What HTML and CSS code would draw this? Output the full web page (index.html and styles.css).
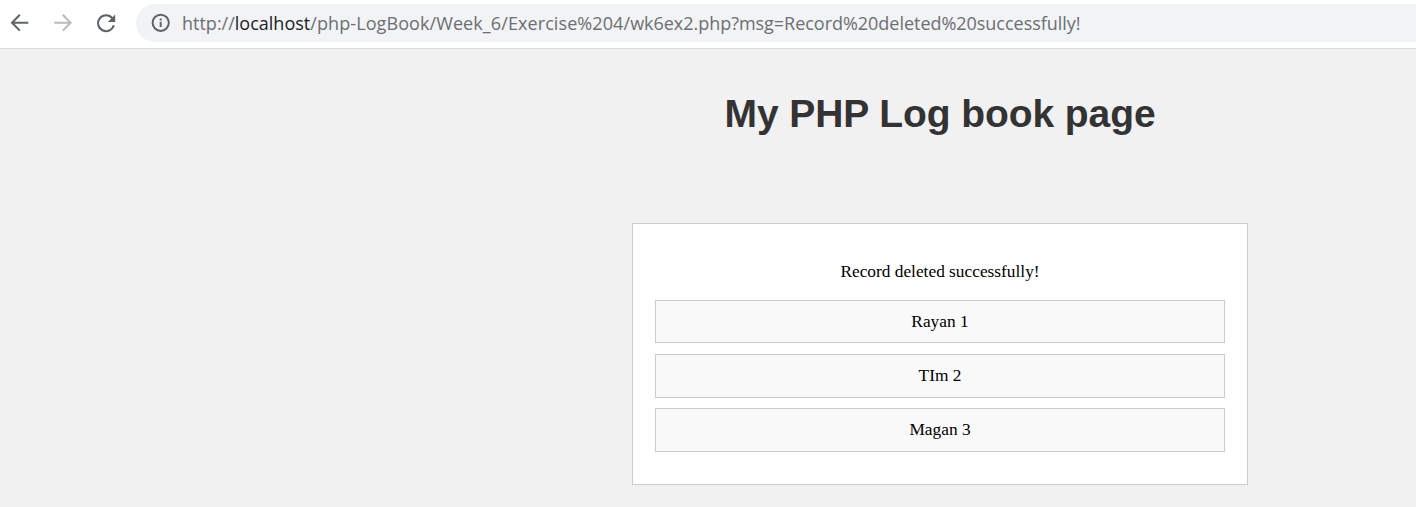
FILE: index.html
```html
<!DOCTYPE html>
<html lang="en">
<head>
<meta charset="utf-8">
<title>My PHP Log book page</title>
<link rel="stylesheet" href="styles.css">
</head>
<body>
<header class="toolbar">
  <svg class="nav" width="120" height="48" viewBox="0 0 120 48" fill="none" stroke-width="2">
    <path stroke="#5f6368" d="M28.3 22.7H12M19.8 14.8L12 22.7L19.8 30.6"/>
    <path stroke="#b9babc" d="M54.3 22.7H70.6M62.8 14.8L70.6 22.7L62.8 30.6"/>
    <path stroke="#5f6368" d="M112.3 18.1A8 8 0 1 0 113.8 25.3"/>
    <path fill="#5f6368" d="M115.2 14.6V21.9H107.9Z"/>
  </svg>
  <div class="address">
    <svg class="info" width="20" height="20" viewBox="0 0 20 20">
      <circle cx="9.7" cy="9.8" r="8.1" fill="none" stroke="#5f6368" stroke-width="2"/>
      <path fill="#5f6368" d="M8.7 5.5h2v2h-2zM8.7 8.8h2v5.2h-2z"/>
    </svg>
    <span class="url"><span class="scheme">http://</span><span class="host">localhost</span><span class="path">/php-LogBook/Week_6/Exercise%204/</span><span class="query">wk6ex2.php?msg=Record%20deleted%20successfully!</span></span>
  </div>
</header>
<main class="page">
  <h1 class="title">My PHP Log book page</h1>
  <section class="card">
    <p class="message">Record deleted successfully!</p>
    <ul class="records">
      <li class="record first">Rayan 1</li>
      <li class="record">TIm 2</li>
      <li class="record">Magan 3</li>
    </ul>
  </section>
</main>
</body>
</html>
```
FILE: styles.css
```css
* { box-sizing: border-box; }
body {
  margin: 0;
  height: 507px;
  overflow: hidden;
  background: #f1f1f1;
  font-family: "Liberation Serif", "Times New Roman", serif;
}
.toolbar {
  display: flex;
  height: 49px;
  padding-top: 4px;
  background: #fff;
  border-bottom: 1px solid #dadcda;
}
.nav { flex: none; margin-top: -4px; }
.address {
  display: flex;
  align-items: center;
  flex: 1;
  height: 38px;
  margin-left: 16px;
  padding-left: 15px;
  background: #f1f3f4;
  border-radius: 19px 0 0 19px;
}
.info { flex: none; margin-right: 11px; }
.url {
  font: 18px/38px "Open Sans", "Noto Sans", sans-serif;
  color: #6c6f73;
  white-space: nowrap;
}
.host { color: #202124; }
.path { letter-spacing: 0.09px; }
.query { letter-spacing: -0.03px; }
.page {
  display: flex;
  flex-direction: column;
  align-items: center;
  padding-left: 464px;
}
.title {
  margin: 41px 0 86px;
  font: bold 39px/47px "Liberation Sans", Arial, sans-serif;
  letter-spacing: -0.08px;
  color: #333;
}
.card {
  width: 616px;
  height: 262px;
  padding: 38px 22px 0;
  background: #fff;
  border: 1px solid #ccc;
  font-size: 17.33px;
  line-height: 20px;
  text-align: center;
}
.message { margin: 0 0 18px; }
.records {
  display: flex;
  flex-direction: column;
  gap: 10px;
  margin: 0;
  padding: 0;
  list-style: none;
}
.record {
  height: 44px;
  padding-top: 11px;
  background: #f9f9f9;
  border: 1px solid #ccc;
}
.first { height: 43px; margin-bottom: 1px; }
```
